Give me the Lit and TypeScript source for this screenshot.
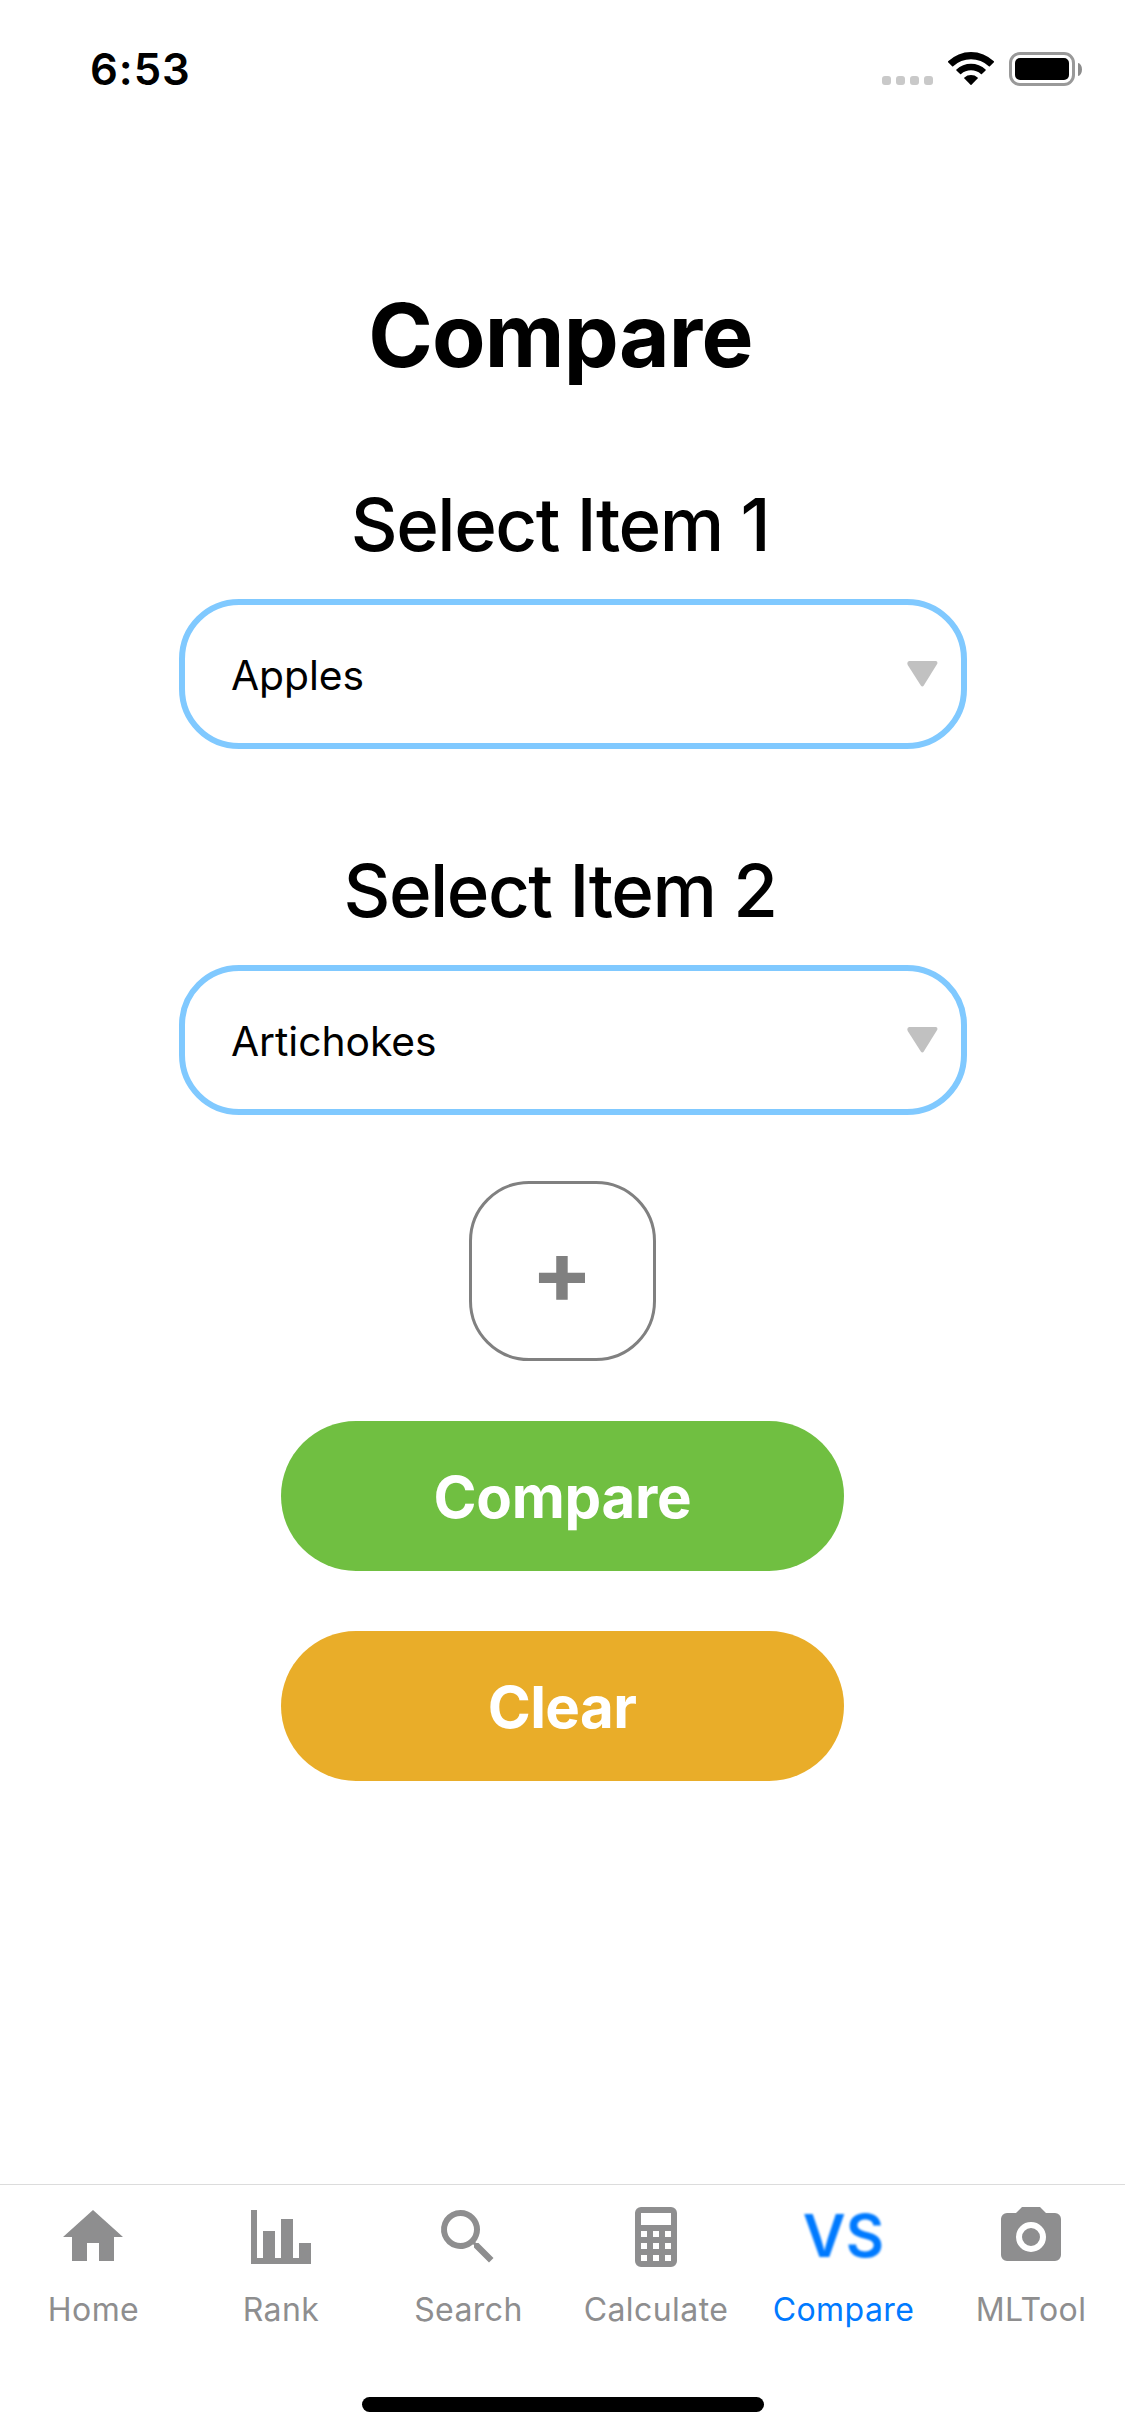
import { LitElement, html, css, svg, TemplateResult } from "lit";
import { customElement, property } from "lit/decorators.js";
import { classMap } from "lit/directives/class-map.js";

type Tab = { id: string; label: string };

const TABS: Tab[] = [
  { id: "home", label: "Home" },
  { id: "rank", label: "Rank" },
  { id: "search", label: "Search" },
  { id: "calculate", label: "Calculate" },
  { id: "compare", label: "Compare" },
  { id: "mltool", label: "MLTool" },
];

const GLYPHS: Record<string, TemplateResult> = {
  home: svg`<path d="M10 20v-6h4v6h5v-8h3L12 3 2 12h3v8z" />`,
  rank: svg`<path d="M22 21H2V3h2v16h2v-9h4v9h2V6h4v13h2v-5h4z" />`,
  search: svg`<path d="M9.5 3A6.5 6.5 0 0 1 16 9.5c0 1.61-.59 3.09-1.56 4.23l.27.27h.79l5 5-1.5 1.5-5-5v-.79l-.27-.27A6.5 6.5 0 1 1 9.5 3m0 2a4.5 4.5 0 1 0 0 9 4.5 4.5 0 0 0 0-9z" />`,
  calculate: svg`<path fill-rule="evenodd" d="M7 2h10a2 2 0 0 1 2 2v16a2 2 0 0 1-2 2H7a2 2 0 0 1-2-2V4a2 2 0 0 1 2-2m0 2v4h10V4zm0 6v2h2v-2zm4 0v2h2v-2zm4 0v2h2v-2zm-8 4v2h2v-2zm4 0v2h2v-2zm4 0v2h2v-2zm-8 4v2h2v-2zm4 0v2h2v-2zm4 0v2h2v-2z" />`,
  mltool: svg`<path fill-rule="evenodd" d="M4 4h3l2-2h6l2 2h3a2 2 0 0 1 2 2v12a2 2 0 0 1-2 2H4a2 2 0 0 1-2-2V6a2 2 0 0 1 2-2m8 3a5 5 0 1 0 0 10 5 5 0 0 0 0-10m0 2a3 3 0 1 1 0 6 3 3 0 0 1 0-6z" />`,
};

@customElement("status-bar")
export class StatusBar extends LitElement {
  static styles = css`
    :host {
      display: flex;
      justify-content: space-between;
      height: 132px;
      box-sizing: border-box;
      padding: 43px 43px 0 90px;
    }
    .time {
      padding-top: 1px;
      font-size: 43.6px;
      line-height: 52px;
      font-weight: 600;
      letter-spacing: 0.93px;
    }
    .indicators {
      display: flex;
      align-items: flex-end;
      height: 43px;
    }
    .dots {
      display: flex;
      gap: 5px;
      padding-bottom: 1px;
    }
    .dot {
      width: 9px;
      height: 9px;
      border-radius: 3px;
      background: #c9c9c9;
    }
    .wifi {
      display: block;
      margin-left: 15px;
    }
    .battery {
      display: flex;
      align-items: center;
      margin-left: 15px;
    }
    .shell {
      box-sizing: border-box;
      width: 66px;
      height: 34px;
      border: 3px solid #999;
      border-radius: 11px;
      padding: 3px;
      display: flex;
    }
    .charge {
      flex: 1;
      border-radius: 5px;
      background: #000;
    }
    .nub {
      width: 4px;
      height: 13px;
      margin-left: 3px;
      border-radius: 0 4px 4px 0 / 0 6.5px 6.5px 0;
      background: #8c8c8c;
    }
  `;

  render() {
    return html`
      <span class="time">6:53</span>
      <div class="indicators">
        <div class="dots">
          <i class="dot"></i><i class="dot"></i><i class="dot"></i><i class="dot"></i>
        </div>
        <svg class="wifi" width="46" height="34" viewBox="948 52 46 34">
          <path d="M948.1 61.3A33 33 0 0 1 993.9 61.3Q994.3 61.8 993.9 62.3L989.9 66.3Q989.3 66.8 988.8 66.3A26 26 0 0 0 953.2 66.3Q952.7 66.8 952.1 66.3L948.1 62.3Q947.7 61.8 948.1 61.3Z" />
          <path d="M956.4 69.4A21.6 21.6 0 0 1 985.6 69.4Q986 69.9 985.6 70.4L981.9 74.1Q981.4 74.6 980.9 74.1A15 15 0 0 0 961.1 74.1Q960.6 74.6 960.1 74.1L956.4 70.4Q956 69.9 956.4 69.4Z" />
          <path d="M964.4 77.6A10 10 0 0 1 977.6 77.6Q978 78.1 977.6 78.6L971.5 84.7Q971 85.1 970.5 84.7L964.4 78.6Q964 78.1 964.4 77.6Z" />
        </svg>
        <div class="battery">
          <div class="shell"><div class="charge"></div></div>
          <div class="nub"></div>
        </div>
      </div>
    `;
  }
}

@customElement("item-picker")
export class ItemPicker extends LitElement {
  @property() label = "";
  @property() value = "";

  static styles = css`
    :host {
      display: flex;
      flex-direction: column;
      align-items: center;
      gap: 29px;
      width: 100%;
    }
    .label {
      margin: 0;
      padding-right: 5px;
      font-size: 72.6px;
      line-height: 90px;
      font-weight: 500;
      letter-spacing: -1.5px;
      white-space: nowrap;
    }
    .field {
      box-sizing: border-box;
      display: flex;
      align-items: center;
      justify-content: space-between;
      width: 788px;
      height: 150px;
      margin-left: 21px;
      padding: 0 23px 0 46px;
      border: 6px solid #80c9ff;
      border-radius: 60px;
    }
    .value {
      padding-top: 2px;
      font-size: 40.8px;
      letter-spacing: -0.05px;
    }
    .arrow {
      display: block;
      margin-bottom: 1px;
      fill: #c1c1c1;
    }
  `;

  render() {
    return html`
      <h2 class="label">${this.label}</h2>
      <div class="field">
        <span class="value">${this.value}</span>
        <svg class="arrow" width="31" height="26" viewBox="0 0 31 26">
          <path d="M2.2 0H28.8Q31.2 .5 30.1 3L16.8 24.6Q15.3 26.6 13.8 24.6L.7 4Q-.5 .8 2.2 0Z" />
        </svg>
      </div>
    `;
  }
}

@customElement("tab-bar")
export class TabBar extends LitElement {
  @property() active = "compare";

  static styles = css`
    :host {
      display: grid;
      grid-template-columns: 187px 188px 187px 188px 187px 188px;
      box-sizing: border-box;
      height: 213px;
      padding-top: 16px;
      border-top: 1px solid #dcdcdc;
    }
    .tab {
      display: flex;
      flex-direction: column;
      align-items: center;
      gap: 17px;
      color: #8e8e8f;
    }
    .tab.active {
      color: #007aff;
    }
    .icon {
      display: block;
      fill: currentColor;
    }
    .tab:nth-child(odd) .icon {
      margin-right: 1px;
    }
    .versus {
      height: 72px;
      font-size: 59px;
      line-height: 70px;
      font-weight: 600;
      letter-spacing: 0;
      white-space: nowrap;
      filter: blur(0.8px);
    }
    .label {
      font-size: 32px;
      line-height: 40px;
      letter-spacing: 0.42px;
    }
  `;

  private icon(id: string) {
    if (id === "compare") return html`<div class="versus">VS</div>`;
    return html`<svg class="icon" width="72" height="72" viewBox="0 0 24 24">${GLYPHS[id]}</svg>`;
  }

  render() {
    return TABS.map(
      (tab) => html`
        <div class=${classMap({ tab: true, active: tab.id === this.active })}>
          ${this.icon(tab.id)}
          <span class="label">${tab.label}</span>
        </div>
      `
    );
  }
}

@customElement("app-root")
export class AppRoot extends LitElement {
  static styles = css`
    :host {
      display: flex;
      flex-direction: column;
      box-sizing: border-box;
      width: 1125px;
      height: 2436px;
      background: #fff;
      color: #000;
      font-family: "Inter", "Liberation Sans", sans-serif;
    }
    .content {
      flex: 1;
      display: flex;
      flex-direction: column;
      align-items: center;
      padding-top: 148px;
    }
    .title {
      margin: 0 0 90px;
      padding-right: 4px;
      font-size: 87.3px;
      line-height: 110px;
      font-weight: 700;
      letter-spacing: -0.73px;
    }
    .second {
      margin-top: 97px;
    }
    .add {
      box-sizing: border-box;
      display: flex;
      align-items: center;
      justify-content: center;
      width: 187px;
      height: 180px;
      margin: 66px 0 60px;
      padding: 2px 1px 0 0;
      border: 3px solid #808080;
      border-radius: 60px;
      color: #808080;
    }
    .plus {
      font-size: 92px;
      line-height: 90px;
      font-weight: 700;
      transform: scaleY(0.95);
    }
    .button {
      box-sizing: border-box;
      display: flex;
      align-items: center;
      justify-content: center;
      width: 563px;
      height: 150px;
      margin-bottom: 60px;
      padding-top: 2px;
      border-radius: 75px;
      color: #fff;
      font-size: 58.2px;
      line-height: 72px;
      font-weight: 700;
    }
    .go {
      background: #70bf41;
      letter-spacing: -0.26px;
    }
    .reset {
      background: #e9ad29;
      letter-spacing: -0.58px;
      padding-right: 1px;
    }
    .home-indicator {
      width: 402px;
      height: 15px;
      margin: 0 auto 24px;
      border-radius: 7.5px;
      background: #000;
    }
  `;

  render() {
    return html`
      <status-bar></status-bar>
      <main class="content">
        <h1 class="title">Compare</h1>
        <item-picker label="Select Item 1" value="Apples"></item-picker>
        <item-picker class="second" label="Select Item 2" value="Artichokes"></item-picker>
        <div class="add" role="button"><span class="plus">+</span></div>
        <div class="button go" role="button">Compare</div>
        <div class="button reset" role="button">Clear</div>
      </main>
      <tab-bar active="compare"></tab-bar>
      <div class="home-indicator"></div>
    `;
  }
}
